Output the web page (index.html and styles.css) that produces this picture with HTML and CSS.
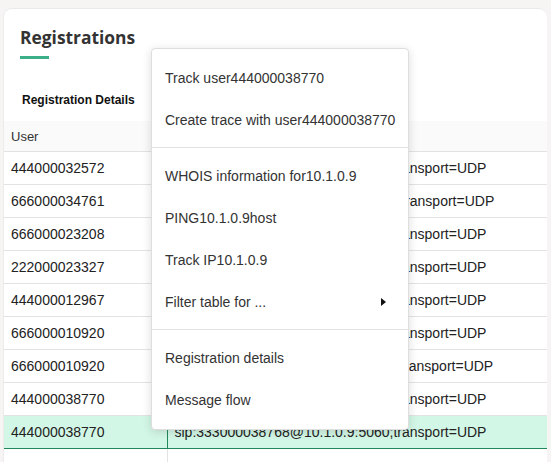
FILE: index.html
```html
<!DOCTYPE html>
<html>
<head>
<meta charset="utf-8">
<link rel="stylesheet" href="styles.css">
</head>
<body>
<div class="card">
  <div class="card-head">
    <h1 class="title">Registrations</h1>
    <div class="title-bar"></div>
  </div>
  <div class="tabs"><span class="tab">Registration Details</span></div>
  <table class="grid">
    <thead>
      <tr><th class="c1">User</th><th class="c2"></th></tr>
    </thead>
    <tbody>
      <tr><td class="c1">444000032572</td><td class="c2">sip:444000032572@10.1.0.3:5060;transport=UDP</td></tr>
      <tr><td class="c1">666000034761</td><td class="c2">sip:666000034761@10.1.0.12:5060;transport=UDP</td></tr>
      <tr><td class="c1">666000023208</td><td class="c2">sip:666000023208@10.1.0.4:5060;transport=UDP</td></tr>
      <tr><td class="c1">222000023327</td><td class="c2">sip:222000023327@10.1.0.7:5060;transport=UDP</td></tr>
      <tr><td class="c1">444000012967</td><td class="c2">sip:444000012967@10.1.0.5:5060;transport=UDP</td></tr>
      <tr><td class="c1">666000010920</td><td class="c2">sip:666000010920@10.1.0.6:5060;transport=UDP</td></tr>
      <tr><td class="c1">666000010920</td><td class="c2">sip:666000010920@10.1.0.11:5060;transport=UDP</td></tr>
      <tr><td class="c1">444000038770</td><td class="c2">sip:444000038770@10.1.0.8:5060;transport=UDP</td></tr>
      <tr class="selected"><td class="c1">444000038770</td><td class="c2">sip:333000038768@10.1.0.9:5060;transport=UDP</td></tr>
      <tr><td class="c1"></td><td class="c2"></td></tr>
    </tbody>
  </table>
</div>

<div class="menu">
  <div class="item">Track user444000038770</div>
  <div class="item">Create trace with user444000038770</div>
  <div class="sep"></div>
  <div class="item">WHOIS information for10.1.0.9</div>
  <div class="item">PING10.1.0.9host</div>
  <div class="item">Track IP10.1.0.9</div>
  <div class="item sub">Filter table for ...<span class="arrow"></span></div>
  <div class="sep"></div>
  <div class="item">Registration details</div>
  <div class="item">Message flow</div>
</div>
</body>
</html>
```

FILE: styles.css
```css
html, body {
  margin: 0;
  padding: 0;
  height: 100%;
  overflow: hidden;
}
body {
  background: #f6f5f4;
  font-family: "Liberation Sans", Arial, sans-serif;
  font-size: 14px;
  color: #222;
}
.card {
  margin: 8px 4px 0 3px;
  background: #fff;
  border-top: 1px solid #e9e9e9;
  border-left: 1px solid #ececec;
  border-top-left-radius: 9px;
  border-top-right-radius: 9px;
  height: 460px;
}
.card-head {
  padding: 16px 0 0 16px;
}
.title {
  margin: 0;
  font-family: "Open Sans", sans-serif;
  font-weight: 700;
  font-size: 17.4px;
  line-height: 24px;
  color: #333;
}
.title-bar {
  width: 29px;
  height: 3px;
  background: #3daf88;
  margin-top: 7px;
}
.tabs {
  padding: 32px 0 0 18px;
  height: 30px;
}
.tab {
  font-size: 12px;
  font-weight: 700;
  color: #111;
  line-height: 14px;
}
.grid {
  border-collapse: collapse;
  width: 100%;
  table-layout: fixed;
}
.grid th {
  background: #fafafa;
  font-weight: 400;
  text-align: left;
  color: #333;
  font-size: 13px;
  height: 30px;
  padding: 0 7px;
  border-bottom: 1px solid #e3e3e3;
}
.grid th.c1 { width: 149px; }
.grid td {
  height: 32px;
  padding: 0 7px;
  border-bottom: 1px solid #e3e3e3;
  white-space: nowrap;
  overflow: hidden;
  color: #222;
}
.grid td.c1 {
  border-right: 1px solid #e3e3e3;
}
.grid tr.selected td {
  background: #d3f7e6;
  border-top: 1px solid #22875a;
  border-bottom: 1px solid #22875a;
}
.grid tr.selected td.c1 {
  border-right: 1px solid #22875a;
}
.menu {
  position: absolute;
  left: 151px;
  top: 48px;
  width: 256px;
  padding: 8px 0;
  background: #fff;
  border: 1px solid #dedede;
  border-radius: 4px;
  box-shadow: 0 2px 10px rgba(0, 0, 0, 0.14);
}
.item {
  height: 42px;
  line-height: 42px;
  padding: 0 13px;
  color: #333;
  font-size: 14px;
  white-space: nowrap;
}
.sub {
  display: flex;
  align-items: center;
  justify-content: space-between;
  padding-right: 22px;
}
.arrow {
  width: 0;
  height: 0;
  border-top: 4.5px solid transparent;
  border-bottom: 4.5px solid transparent;
  border-left: 5px solid #111;
}
.sep {
  height: 1px;
  background: #e2e2e2;
  margin: 6px 0 7px;
}
```
